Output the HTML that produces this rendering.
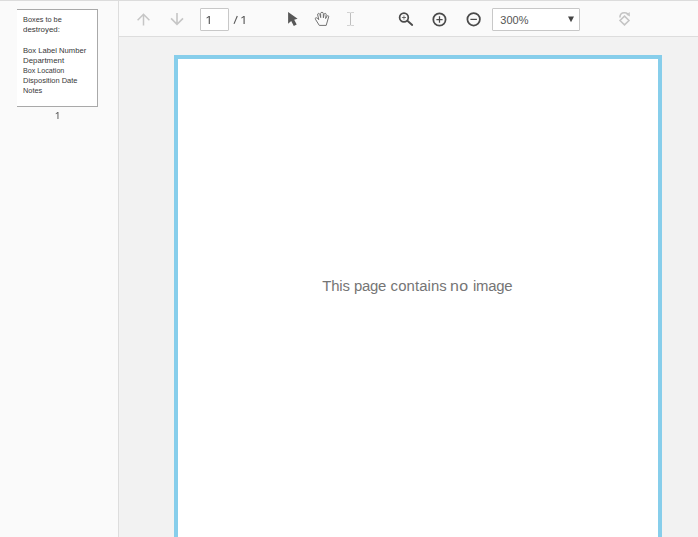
<!DOCTYPE html>
<html><head><meta charset="utf-8">
<style>
html,body{margin:0;padding:0;}
body{width:698px;height:537px;overflow:hidden;background:#f2f2f2;font-family:"Liberation Sans",sans-serif;position:relative;}
#topline{position:absolute;left:0;top:0;width:698px;height:1px;background:#dcdcdc;}
#side{position:absolute;left:0;top:1px;width:118px;height:536px;background:#fafafa;border-right:1px solid #dddddd;}
#thumb{position:absolute;left:17px;top:8px;width:80px;height:96px;background:#fff;border-top:1px solid #a9a9a9;border-right:1px solid #a9a9a9;border-bottom:1px solid #a9a9a9;box-sizing:content-box;}
#thumb div{position:absolute;left:5.5px;transform-origin:0 0;font-size:7.7px;color:#383838;white-space:nowrap;line-height:10px;}
#bar{position:absolute;left:119px;top:1px;width:579px;height:35px;background:#fafafa;border-bottom:1px solid #dddddd;}
#main{position:absolute;left:119px;top:37px;width:579px;height:500px;background:#f2f2f2;}
#page{position:absolute;left:174px;top:55px;width:480px;height:490px;background:#fff;border:4px solid #87ceeb;}
#msg{position:absolute;left:0;top:277.7px;font-size:14.9px;color:#757575;white-space:nowrap;}
#msg span{position:absolute;top:0;}
#pg{position:absolute;left:200px;top:8px;width:27px;height:21px;border:1px solid #c8c8c8;border-radius:1px;background:#fff;box-sizing:content-box;}
#zoom{position:absolute;left:492px;top:8px;width:86px;height:21px;border:1px solid #c8c8c8;border-radius:1px;background:#fff;}
#zoom span{position:absolute;left:7.3px;top:5.2px;font-size:11px;color:#555;line-height:13px;}
#icons{position:absolute;left:0;top:0;}
</style></head><body>
<div id="topline"></div>
<div id="side">
 <div id="thumb">
  <div style="top:5.3px;transform:scaleX(0.955)">Boxes to be</div>
  <div style="top:14.9px;transform:scaleX(1.03)">destroyed:</div>
  <div style="top:35.6px;transform:scaleX(0.993)">Box Label Number</div>
  <div style="top:46.2px;transform:scaleX(1.023)">Department</div>
  <div style="top:56.3px;transform:scaleX(0.93)">Box Location</div>
  <div style="top:66.3px;transform:scaleX(0.974)">Disposition Date</div>
  <div style="top:76.4px;transform:scaleX(0.96)">Notes</div>
 </div>
</div>
<div id="bar"></div>
<div id="main"></div>
<div id="page"></div>
<div id="msg"><span id="w1" style="left:322.2px;letter-spacing:-0.15px">This</span><span id="w2" style="left:354.1px;letter-spacing:-0.3px">page</span><span id="w3" style="left:390.6px;letter-spacing:0.1px">contains</span><span id="w4" style="left:450.3px;letter-spacing:0.3px;transform:scaleX(1.07);transform-origin:0 0">no</span><span id="w5" style="left:472.9px;letter-spacing:-0.2px">image</span></div>
<div id="pg"></div>
<div id="zoom"><span>300%</span></div>
<svg id="icons" width="698" height="537" viewBox="0 0 698 537" fill="none">
 <!-- thumbnail page number "1" -->
 <path d="M57.45 112.1H58.45V118.9H57.45V113.3L55.95 114.3L55.55 113.69999999999999Z" fill="#606060"/>
 <!-- up / down arrows -->
 <path d="M143.5 25.6V14.3M137.6 20.2L143.5 14.3L149.4 20.2" stroke="#c6c6c6" stroke-width="1.5"/>
 <path d="M177 13V24.2M171.1 18.4L177 24.3L183 18.4" stroke="#c6c6c6" stroke-width="1.6"/>
 <!-- page "1" and "/ 1" -->
 <path d="M208.73 16H209.88V23.9H208.73V17.3L206.80 18.4L206.40 17.7Z" fill="#585858"/>
 <path d="M234 23.9L237.3 16" stroke="#585858" stroke-width="1.1"/>
 <path d="M243.53 16H244.67V23.9H243.53V17.3L241.60 18.4L241.20 17.7Z" fill="#585858"/>
 <!-- cursor arrow -->
 <path d="M288.1 12V23.8L291.2 21L293.8 25.9L296.7 24.5L294.2 19.7L297.6 18.7Z" fill="#585858"/>
 <!-- hand -->
 <path d="M319.3 25.4L315.4 19.2Q314.9 18.2 315.8 17.8Q316.5 17.5 317.2 18.2L318.8 19.6L317.7 15Q317.5 13.6 318.4 13.4Q319.4 13.2 319.8 14.4L320.7 17.6L320.6 13.4Q320.8 12.3 322 12.3Q323.2 12.3 323.3 13.5L323.4 17.8L324.1 14.3Q324.4 13.2 325.4 13.4Q326.3 13.6 326.2 14.7L325.6 18.5L327 16.2Q327.5 15.3 328.2 15.7Q328.9 16.1 328.6 17L326.2 25.4Z" stroke="#6a6a6a" stroke-width="0.95" stroke-linejoin="round"/>
 <!-- I-beam -->
 <path d="M350.5 12.8V25.2" stroke="#bebebe" stroke-width="1"/><path d="M347 12.5H349.4Q350.3 12.5 350.5 13.2Q350.7 12.5 351.6 12.5H354M347 25.5H349.4Q350.3 25.5 350.5 24.8Q350.7 25.5 351.6 25.5H354" stroke="#c4c4c4" stroke-width="0.75"/>
 <!-- magnifier -->
 <circle cx="403.95" cy="17.5" r="4.35" stroke="#4a4a4a" stroke-width="1.7"/>
 <path d="M407.7 21.1L412.2 24.9" stroke="#4a4a4a" stroke-width="1.9" stroke-linecap="round"/>
 <path d="M401.9 17.5H406" stroke="#4a4a4a" stroke-width="0.75"/><path d="M403.95 15.4V19.6" stroke="#4a4a4a" stroke-width="0.7"/>
 <!-- zoom in -->
 <circle cx="439.45" cy="19.45" r="6.15" stroke="#4a4a4a" stroke-width="1.75"/>
 <path d="M436.4 19.5H442.6M439.5 16.3V22.7" stroke="#4a4a4a" stroke-width="1.25"/>
 <!-- zoom out -->
 <circle cx="473.65" cy="19.3" r="6.25" stroke="#4a4a4a" stroke-width="1.75"/>
 <path d="M470.4 19.4H476.9" stroke="#4a4a4a" stroke-width="1.25"/>
 <!-- select caret -->
 <path d="M568 16.5H574L571 22.3Z" fill="#444"/>
 <!-- rotate -->
 <path d="M624.5 16.1L629 20.5L624.5 24.9L620 20.5Z" stroke="#c4c4c4" stroke-width="1.5"/>
 <path d="M619.9 17.6Q619.9 12.7 624.3 12.7Q626.5 12.7 628 14" stroke="#c4c4c4" stroke-width="1.6"/>
 <path d="M629.7 12L630 16.5L626.2 14.8Z" fill="#c6c6c6"/>
</svg>
</body></html>
